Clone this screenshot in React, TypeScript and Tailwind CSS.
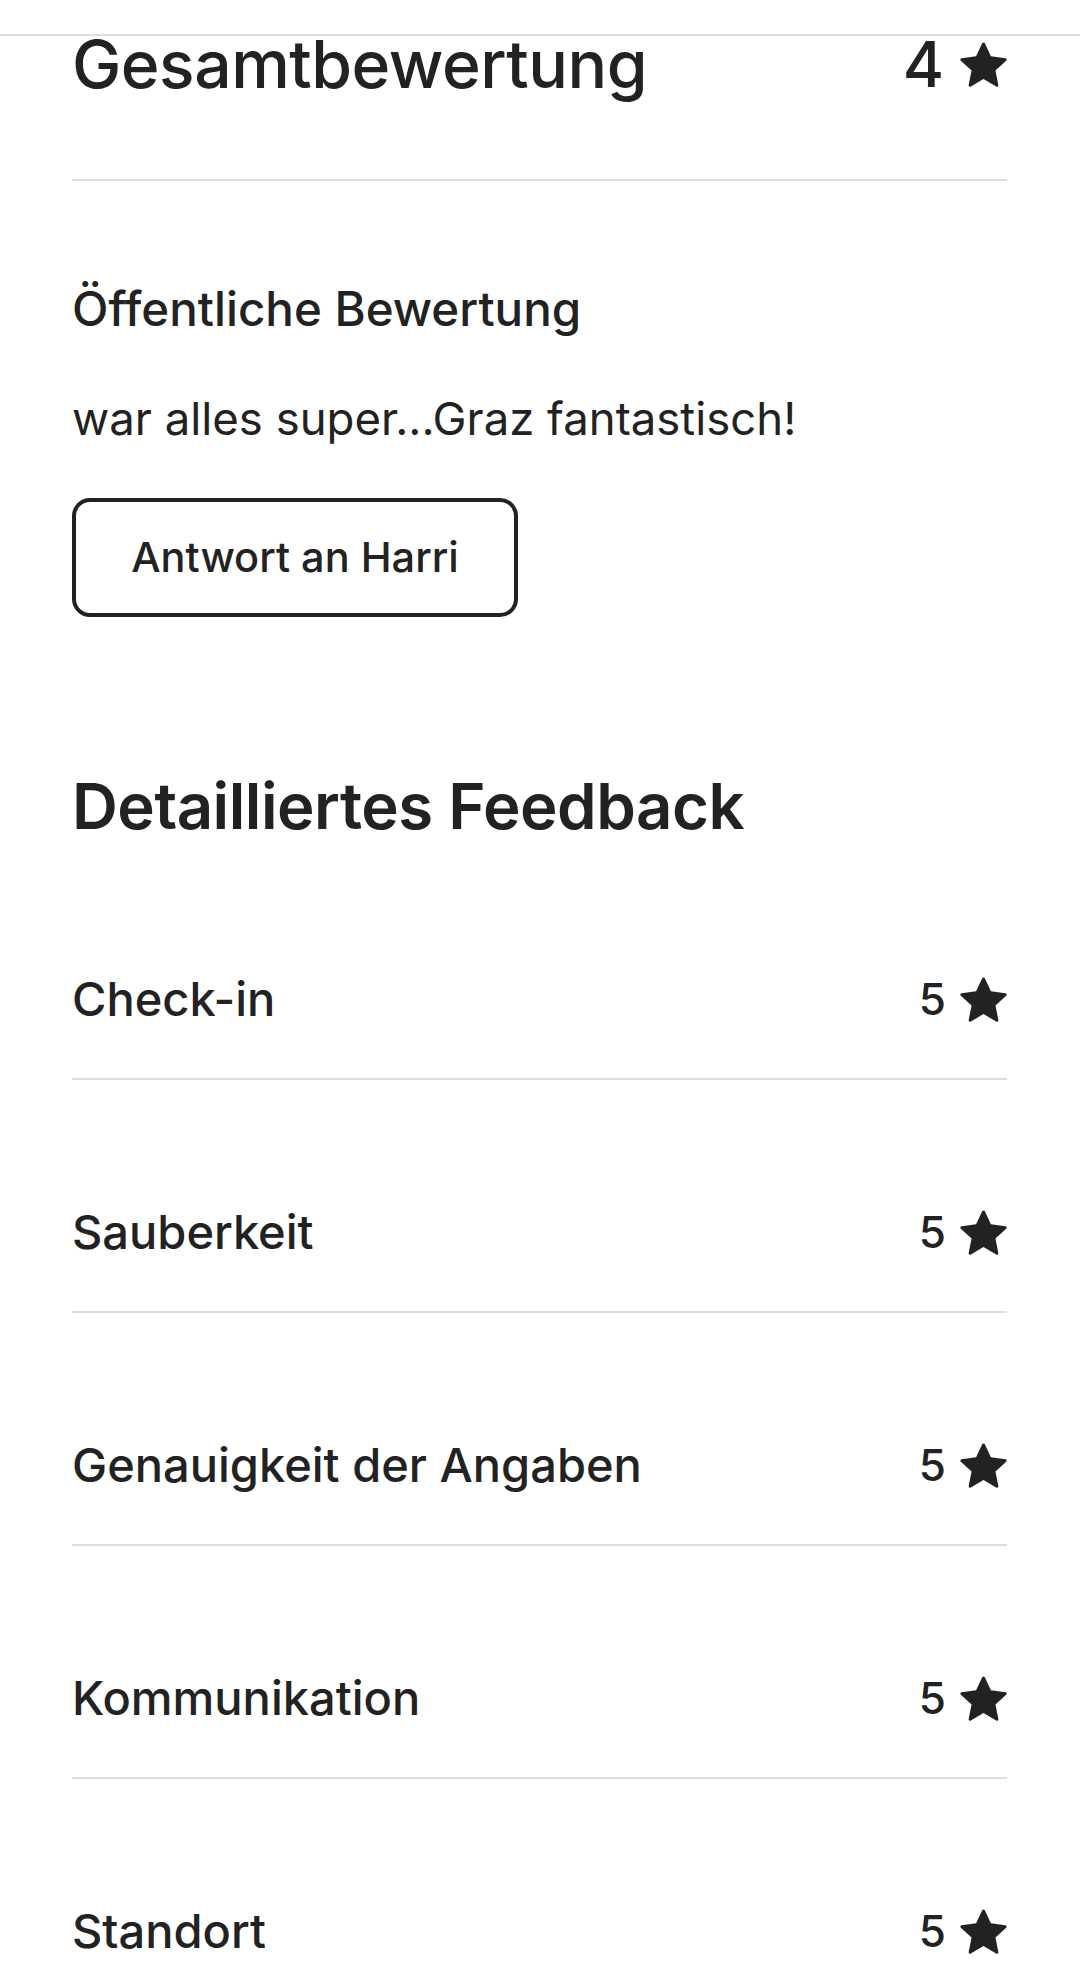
import React from "react";

const Star = () => (
  <svg viewBox="0 0 32 32" className="w-[47px] h-[47px] shrink-0" fill="#222222" aria-hidden="true">
    <path d="M15.1 1.58l-4.13 8.88-9.86 1.27a1 1 0 0 0-.54 1.74l7.3 6.57-1.97 9.85a1 1 0 0 0 1.48 1.06l8.62-5 8.63 5a1 1 0 0 0 1.48-1.06l-1.97-9.85 7.3-6.57a1 1 0 0 0-.55-1.73l-9.86-1.28-4.12-8.88a1 1 0 0 0-1.82 0z" />
  </svg>
);

const feedback = [
  { label: "Check-in", score: 5 },
  { label: "Sauberkeit", score: 5 },
  { label: "Genauigkeit der Angaben", score: 5 },
  { label: "Kommunikation", score: 5 },
  { label: "Standort", score: 5 },
];

export default function App() {
  return (
    <div className="w-[1080px] h-[1987px] overflow-hidden bg-white text-[#222222] font-['Inter','Noto_Sans',sans-serif]">
      {/* header leftover */}
      <div className="h-[36px] border-b-2 border-[#dddddd]" />

      <div className="pl-[72px] pr-[73px]">
        {/* Gesamtbewertung */}
        <div className="flex items-center justify-between border-b-2 border-[#dddddd] pb-[87px]">
          <h1 className="text-[66px] leading-[56px] font-medium tracking-[-0.5px]">Gesamtbewertung</h1>
          <div className="flex items-center gap-[16px]">
            <span className="text-[63px] leading-[56px] font-medium">4</span>
            <Star />
          </div>
        </div>

        {/* Öffentliche Bewertung */}
        <div className="pt-[100px]">
          <h2 className="text-[47.5px] leading-[56px] font-medium">Öffentliche Bewertung</h2>
          <p className="mt-[54px] text-[45.5px] leading-[56px] font-normal">war alles super...Graz fantastisch!</p>
          <button className="mt-[51px] w-[446px] h-[119px] border-4 border-[#222222] rounded-[18px] flex items-center justify-center text-[41.5px] font-medium">
            Antwort an Harri
          </button>
        </div>

        {/* Detailliertes Feedback */}
        <h2 className="mt-[151px] text-[63.5px] leading-[76px] font-semibold tracking-[-0.5px]">Detailliertes Feedback</h2>

        <div className="mt-[3px]">
          {feedback.map((item) => (
            <div
              key={item.label}
              className="flex items-center justify-between pt-[122px] pb-[49px] border-b-2 border-[#dddddd]"
            >
              <span className="text-[47px] leading-[60px] font-medium">{item.label}</span>
              <div className="flex items-center gap-[14px]">
                <span className="text-[44px] leading-[60px] font-medium">{item.score}</span>
                <Star />
              </div>
            </div>
          ))}
        </div>
      </div>
    </div>
  );
}
